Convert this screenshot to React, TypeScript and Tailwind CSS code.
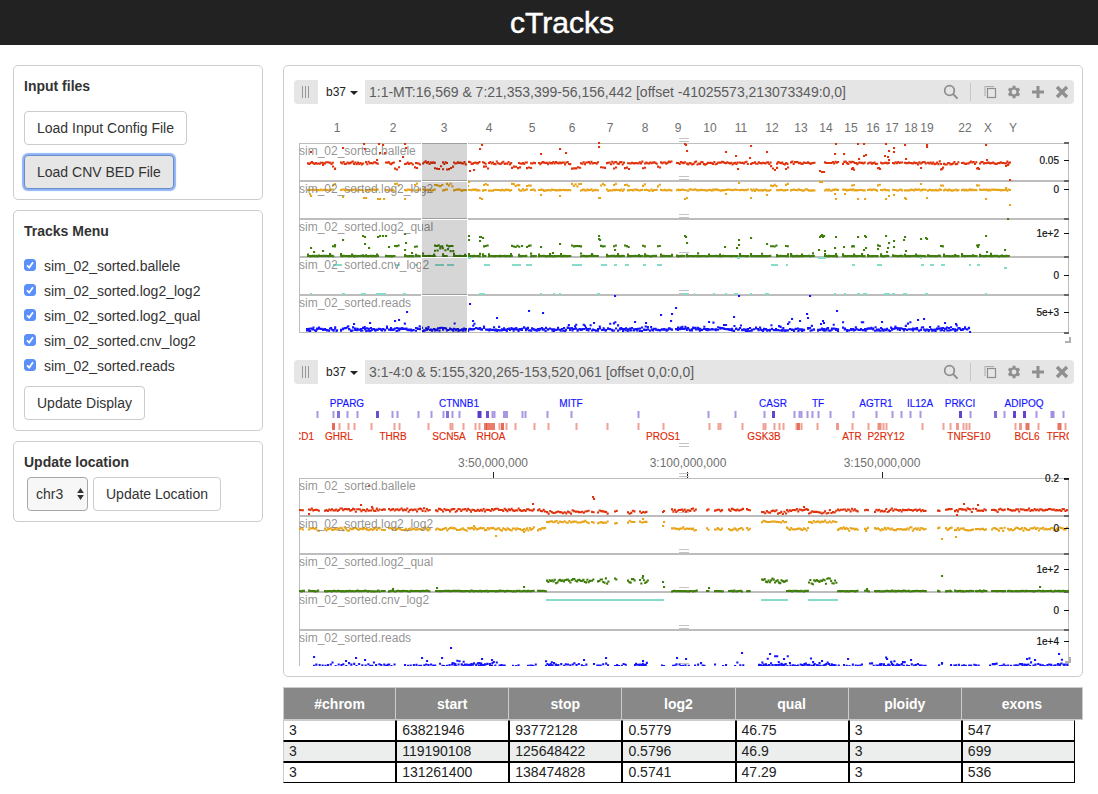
import type { ReactNode } from "react";

type Range = [number, number];
type Point = [number, number];

const RED = "#e0320c";
const AMBER = "#e8a51c";
const GREEN = "#3f7d0c";
const TEAL = "#86dccb";
const BLUE = "#1414ff";
const FONT = "'Liberation Sans', Arial, sans-serif";

const TRACKS = [
  "sim_02_sorted.ballele",
  "sim_02_sorted.log2_log2",
  "sim_02_sorted.log2_qual",
  "sim_02_sorted.cnv_log2",
  "sim_02_sorted.reads",
];

function makeRandom(seed: number) {
  let s = seed;
  return () => {
    s = (s * 1664525 + 1013904223) % 4294967296;
    return s / 4294967296;
  };
}

/* Fills each x range with points scattered round a level. */
function scatter(ranges: Range[], level: number, spread: number, step: number, seed: number): Point[] {
  const rnd = makeRandom(seed);
  const out: Point[] = [];
  for (const [a, b] of ranges) {
    for (let x = a; x <= b; x += step) out.push([x, level + (rnd() + rnd() - 1) * spread]);
  }
  return out;
}

/* Read depth: most points near the floor, with an exponential tail upwards. */
function depth(ranges: Range[], floor: number, scale: number, step: number, seed: number): Point[] {
  const rnd = makeRandom(seed);
  const out: Point[] = [];
  for (const [a, b] of ranges) {
    for (let x = a; x <= b; x += step * (0.6 + rnd() * 0.8)) {
      out.push([x, floor - Math.min(-Math.log(1 - rnd()) * scale, scale * 4)]);
    }
  }
  return out;
}

function dotsPath(points: Point[]) {
  return points.map(([x, y]) => `M${(x - 1).toFixed(1)} ${(y - 1).toFixed(1)}h2.1v2.1h-2.1z`).join("");
}

function Dots({ points, color }: { points: Point[]; color: string }) {
  return <path d={dotsPath(points)} fill={color} />;
}

function Bars({ ranges, y, color }: { ranges: Range[]; y: number; color: string }) {
  return <path d={ranges.map(([a, b]) => `M${a} ${y}H${b}`).join("")} stroke={color} strokeWidth={2} />;
}

/* ---------- Whole-genome view ---------- */

const CHROMS: [string, number][] = [
  ["1", 337], ["2", 393], ["3", 444], ["4", 489], ["5", 532], ["6", 572], ["7", 610], ["8", 645],
  ["9", 678], ["10", 710], ["11", 741], ["12", 772], ["13", 801], ["14", 826], ["15", 851],
  ["16", 873], ["17", 892], ["18", 911], ["19", 927], ["22", 965], ["X", 988], ["Y", 1013],
];

const BASE: Range[] = [
  [308, 334], [341, 364], [366, 378], [386, 395], [405, 414], [416, 420], [423, 435], [443, 447],
  [454, 467], [469, 480], [483, 486], [489, 512], [519, 527], [531, 536], [539, 571], [581, 598],
  [607, 624], [628, 643], [645, 657], [661, 672], [677, 685], [687, 738], [740, 749], [751, 771],
  [777, 788], [791, 815], [825, 838], [843, 860], [862, 865], [868, 878], [881, 889], [893, 903],
  [905, 926], [928, 941], [944, 959], [962, 977], [980, 1010],
];

const GAINS: Range[] = [
  [333, 336], [395, 400], [415, 418], [435, 443], [447, 454], [484, 489], [512, 520], [527, 531],
  [572, 581], [601, 606], [614, 616], [625, 629], [643, 645], [658, 661], [771, 778], [786, 788],
  [852, 855], [878, 881], [941, 944], [977, 979],
];

const LOSSES: Range[] = [
  [310, 312], [342, 345], [361, 366], [376, 386], [403, 406], [479, 485], [540, 542], [553, 555],
  [559, 561], [597, 600], [683, 688], [694, 695], [713, 715], [725, 727], [734, 738], [750, 752],
  [765, 769], [834, 836], [844, 846], [857, 860], [863, 867], [884, 890], [892, 895], [903, 907],
  [925, 928], [985, 987],
];

const RED_HIGH: Point[] = [
  [311, 152], [343, 148], [364, 144], [365, 149], [379, 144], [383, 145], [380, 153], [385, 153],
  [405, 144], [406, 148], [403, 157], [400, 161], [377, 160], [480, 149], [482, 145], [541, 154],
  [560, 149], [566, 153], [599, 143], [599, 147], [685, 144], [686, 145], [687, 151], [726, 152],
  [736, 156], [750, 158], [751, 146], [767, 152], [836, 144], [835, 154], [844, 154], [859, 159],
  [858, 144], [864, 144], [864, 156], [866, 155], [886, 144], [885, 156], [889, 151], [888, 157],
  [889, 160], [894, 148], [894, 152], [905, 145], [927, 145], [927, 147], [906, 159], [986, 145],
  [987, 160], [1010, 180],
];

const RED_LOW: Point[] = [
  [335, 169], [323, 165], [470, 171], [474, 170], [738, 169], [820, 171], [822, 172], [824, 172], [853, 168],
  [879, 168], [921, 168], [942, 169], [978, 168], [1006, 166], [1008, 165],
];

const AMBER_EXTRA: Point[] = [
  [310, 194], [311, 196], [343, 197], [364, 198], [366, 198], [378, 199], [380, 199], [384, 199], [405, 199],
  [469, 182], [468, 186], [480, 198], [482, 199], [541, 195], [560, 196], [599, 198], [600, 198], [685, 199],
  [687, 198], [726, 194], [739, 183], [751, 198], [767, 195], [820, 182], [822, 182], [836, 199], [835, 194],
  [858, 199], [865, 199], [845, 194], [886, 199], [889, 196], [894, 195], [905, 198], [906, 199],
  [921, 184], [927, 198], [986, 199], [1006, 188], [1010, 205],
];

const GREEN_EXTRA: Point[] = [
  [311, 248], [314, 252], [323, 251], [335, 245], [343, 240], [363, 236], [365, 237], [365, 244], [369, 248],
  [378, 237], [380, 236], [383, 236], [386, 236], [389, 247], [405, 234], [406, 243], [405, 250], [412, 253],
  [469, 236], [469, 240], [480, 237], [481, 237], [483, 238], [480, 241], [522, 246], [541, 247], [553, 253],
  [560, 244], [599, 236], [599, 239], [600, 240], [615, 250], [685, 236], [686, 237], [687, 243], [725, 247],
  [739, 240], [737, 248], [739, 245], [751, 238], [767, 244], [820, 237], [821, 236], [822, 235], [823, 237],
  [824, 236], [819, 250], [825, 251], [836, 237], [835, 248], [844, 247], [858, 237], [865, 236], [866, 237],
  [864, 250], [853, 246], [866, 248], [878, 249], [886, 236], [889, 243], [888, 248], [887, 252], [894, 241],
  [894, 247], [905, 237], [904, 240], [906, 251], [921, 239], [926, 238], [927, 239], [942, 246], [978, 247],
  [986, 236], [987, 252], [1005, 250], [1008, 219],
];

const TEAL_HIGH: Range[] = [
  [333, 342], [395, 400], [415, 418], [435, 444], [447, 454], [484, 490], [512, 521], [526, 532],
  [572, 582], [601, 607], [614, 617], [625, 629], [643, 646], [657, 662], [771, 778], [786, 788],
  [852, 855], [877, 882], [921, 924], [930, 934], [941, 945], [969, 971], [977, 980],
];

const READS_HIGH: Point[] = [
  [470, 304], [407, 312], [529, 311], [543, 313], [615, 296], [661, 315], [676, 308], [672, 314], [671, 321],
  [399, 320], [370, 323], [497, 318], [473, 321], [395, 321], [354, 324], [594, 323], [635, 322], [646, 323],
  [734, 317], [709, 322], [724, 325], [726, 325], [792, 319], [800, 321], [807, 314], [808, 318], [837, 311],
  [810, 296], [739, 296], [823, 321], [824, 323], [788, 324], [821, 324], [882, 322], [918, 320], [924, 319],
  [945, 323], [956, 324], [970, 332],
];

const READ_SPANS: Range[] = [[307, 337], [341, 414], [416, 467], [468, 672], [676, 805], [808, 815], [818, 838], [843, 970]];

function Divider({ y }: { y: number }) {
  return (
    <>
      <rect x={299} y={y - 1} width={770} height={2} fill="#bdbdbd" />
      <rect x={1064} y={y - 1} width={5} height={2} fill="#666" />
    </>
  );
}

function Grip({ y }: { y: number }) {
  return <path d={`M679 ${y + 0.5}h10M679 ${y + 3.5}h10`} stroke="#c4c4c4" strokeWidth={1} />;
}

function AxisTick({ y, label }: { y: number; label: string }) {
  return (
    <>
      <path d={`M1064 ${y + 0.5}h5`} stroke="#111" />
      <text x={1059} y={y + 4} textAnchor="end" fontSize={10} fill="#111" stroke="#111" strokeWidth={0.2}>
        {label}
      </text>
    </>
  );
}

function TrackNames({ tops }: { tops: number[] }) {
  return (
    <g fontSize={12} fill="#808080" fillOpacity={0.85}>
      {TRACKS.map((name, i) => (
        <text key={name} x={299} y={tops[i] + 12}>{name}</text>
      ))}
    </g>
  );
}

function GenomeView() {
  return (
    <svg viewBox="294 104 780 256" className="block h-auto w-full" fontFamily={FONT} role="img" aria-label="Whole genome tracks">
      <g fontSize={12} fill="#707070" textAnchor="middle">
        {CHROMS.map(([name, x]) => (
          <text key={name} x={x} y={132}>{name}</text>
        ))}
      </g>
      <path d="M299 143.5H1069M299 332.5H1069M299.5 143V333M1068.5 143V333" stroke="#bdbdbd" />
      <rect x={1064} y={142} width={5} height={2} fill="#666" />
      <rect x={1064} y={332} width={5} height={2} fill="#666" />
      {[181, 219, 257, 295].map((y) => <Divider key={y} y={y} />)}
      {[138, 176, 214, 252, 290].map((y) => <Grip key={y} y={y} />)}

      <Dots color={RED} points={[...scatter(BASE, 163, 1.8, 1.3, 7), ...scatter(GAINS, 168, 2, 2, 8), ...RED_HIGH, ...RED_LOW]} />
      <Dots color={AMBER} points={[...scatter(BASE, 190, 0.9, 1.3, 17), ...scatter(GAINS, 185, 1.8, 1.8, 18), ...AMBER_EXTRA]} />
      <Dots color={GREEN} points={[...scatter(BASE, 256, 0.3, 1.2, 27), ...scatter(BASE, 254.5, 1.6, 11, 28), ...scatter(GAINS, 246, 1.2, 1.8, 29), ...scatter([[435, 454]], 250, 3, 2.6, 30), ...GREEN_EXTRA]} />
      <Bars color={TEAL} y={265} ranges={TEAL_HIGH} />
      <Bars color={TEAL} y={294} ranges={LOSSES} />
      <Bars color={TEAL} y={258} ranges={[[818, 826], [737, 740], [920, 922], [468, 471]]} />
      <Bars color={TEAL} y={268} ranges={[[1004, 1007]]} />
      <Dots color={BLUE} points={[...depth(READ_SPANS, 331, 2.2, 1.9, 91), ...scatter(READ_SPANS, 329, 2, 2, 38), ...READS_HIGH]} />

      <TrackNames tops={[143, 181, 219, 257, 295]} />
      <rect x={422} y={143} width={45} height={190} fill="#000" fillOpacity={0.16} />
      <path d="M421.5 143V334M467.5 143V334M422 181.5H467M422 219.5H467M422 257.5H467M422 295.5H467" stroke="#fff" />

      <AxisTick y={160} label="0.05" />
      <AxisTick y={189} label="0" />
      <AxisTick y={233} label="1e+2" />
      <AxisTick y={275} label="0" />
      <AxisTick y={312} label="5e+3" />
      <path d="M1065 342H1070V337" fill="none" stroke="#b0b0b0" strokeWidth={2} />
    </svg>
  );
}

/* ---------- Chromosome 3 view ---------- */

type Mark = [x: number, width: number, opacity: number];

const m = (xs: number[], width = 2, opacity = 0.5): Mark[] => xs.map((x) => [x, width, opacity]);

const FORWARD: Mark[] = [
  ...m([317, 333, 347, 357, 392, 397, 418, 431, 443, 452, 459, 492, 494, 522, 525, 547, 571, 638, 708, 735, 764, 794, 799, 801, 807, 812, 818]),
  ...m([830, 853, 876, 892, 901, 910, 920, 970, 1004, 1036, 1063]),
  ...m([338, 447], 3, 0.7), ...m([377, 487], 3, 0.85), ...m([479], 4, 0.95), ...m([505], 5, 0.5),
  ...m([773, 960, 1014, 1024], 3, 0.9), ...m([995], 3, 0.7), ...m([1052], 4, 0.55),
];

const REVERSE: Mark[] = [
  ...m([339, 348, 354, 371, 394, 399, 428, 450, 452, 463, 475, 479, 499, 506, 515, 534, 548, 576, 607, 638, 663, 709, 718, 720, 742, 763, 765, 774, 779, 783, 796, 801, 817]),
  ...m([852, 868, 883, 886, 922, 943, 950, 963, 966, 969, 1015, 1038, 1065]),
  ...m([333, 502], 3, 0.8), ...m([485, 487, 490, 493], 3, 0.7), ...m([798], 3, 0.75),
  ...m([837, 957, 1020], 3, 0.55), ...m([879], 4, 0.6), ...m([1027, 1059], 4, 0.75),
];

const FORWARD_GENES: [string, number][] = [
  ["PPARG", 347], ["CTNNB1", 459], ["MITF", 571], ["CASR", 773], ["TF", 818],
  ["AGTR1", 876], ["IL12A", 920], ["PRKCI", 960], ["ADIPOQ", 1024],
];

const REVERSE_GENES: [string, number][] = [
  ["CD1", 304], ["GHRL", 339], ["THRB", 393], ["SCN5A", 449], ["RHOA", 491], ["PROS1", 663],
  ["GSK3B", 764], ["ATR", 852], ["P2RY12", 886], ["TNFSF10", 969], ["BCL6", 1027], ["TFRC", 1060],
];

const C3_BASE: Range[] = [
  [300, 304], [309, 319], [325, 380], [382, 385], [389, 430], [436, 530], [531, 534], [538, 546],
  [672, 697], [707, 709], [715, 723], [729, 743], [747, 750], [787, 808], [838, 858], [865, 869],
  [875, 926], [938, 940], [946, 952], [955, 974], [976, 987], [992, 1005], [1008, 1068],
];
const C3_GAIN: Range[] = [[547, 590], [592, 594], [598, 609], [615, 617], [628, 635], [640, 648], [762, 787], [809, 837]];
const C3_CALLS: Range[] = [[546, 664], [761, 788], [808, 838]];
const C3_READS: Range[] = [
  [314, 395], [405, 436], [440, 507], [513, 521], [528, 538], [546, 589], [594, 609], [615, 627],
  [635, 648], [662, 666], [673, 691], [695, 706], [715, 717], [723, 727], [735, 744], [759, 839],
  [844, 862], [870, 926], [939, 943], [951, 979], [990, 1068],
];
const C3_READS_BUSY: Range[] = [[452, 495], [546, 560], [636, 647], [759, 790], [802, 832], [880, 905], [1022, 1032], [1058, 1068]];

function C3View() {
  return (
    <svg viewBox="294 384 780 282" className="block h-auto w-full" fontFamily={FONT} role="img" aria-label="Chromosome 3 tracks">
      <defs>
        <clipPath id="c3-plot">
          <rect x={299} y={384} width={770} height={282} />
        </clipPath>
      </defs>
      <g clipPath="url(#c3-plot)">
        {FORWARD.map(([x, w, o], i) => (
          <rect key={i} x={x - w / 2 + 0.5} y={411} width={w} height={7} fill="#5330c8" fillOpacity={o} />
        ))}
        {REVERSE.map(([x, w, o], i) => (
          <rect key={i} x={x - w / 2 + 0.5} y={423} width={w} height={7} fill="#e0452c" fillOpacity={o} />
        ))}
        <g fontSize={10} textAnchor="middle" fill="#1414ff" stroke="#1414ff" strokeWidth={0.15}>
          {FORWARD_GENES.map(([name, x]) => <text key={name} x={x} y={407}>{name}</text>)}
        </g>
        <g fontSize={10} textAnchor="middle" fill="#dd2c08" stroke="#dd2c08" strokeWidth={0.15}>
          {REVERSE_GENES.map(([name, x]) => <text key={name} x={x} y={440}>{name}</text>)}
        </g>
      </g>
      <Grip y={443} />
      <g fontSize={12} fill="#707070" textAnchor="middle">
        <text x={493} y={467}>3:50,000,000</text>
        <text x={688} y={467}>3:100,000,000</text>
        <text x={882} y={467}>3:150,000,000</text>
      </g>
      <path d="M493.5 472V478M687.5 472V478M882.5 472V478" stroke="#222" />
      <path d="M299 478.5H1069M299.5 478V666M1068.5 478V666" stroke="#bdbdbd" />
      {[516, 554, 592, 630].map((y) => <Divider key={y} y={y} />)}
      {[473, 512, 549, 587, 625, 663].map((y) => <Grip key={y} y={y} />)}

      <g clipPath="url(#c3-plot)">
        <Dots color={RED} points={[...scatter(C3_BASE, 510, 2, 1.4, 5), ...scatter(C3_GAIN, 512, 2, 1.6, 6), [369, 486], [361, 505], [372, 507], [533, 504], [593, 497], [594, 499], [663, 512], [664, 511], [964, 504], [978, 505], [957, 515], [309, 514], [804, 507]]} />
        <Dots color={AMBER} points={[...scatter(C3_BASE, 529, 1.9, 1.4, 15), ...scatter(C3_GAIN, 522, 1.6, 1.6, 16), [496, 536], [942, 539], [956, 537], [663, 526], [664, 522], [866, 531], [524, 532], [474, 526], [643, 519]]} />
        <Dots color={GREEN} points={[...scatter(C3_BASE, 591, 0.5, 1.3, 25), ...scatter(C3_GAIN, 581, 3.6, 1.3, 26), [942, 576], [1040, 587], [643, 576], [663, 582], [664, 587], [524, 587], [393, 589], [437, 588], [709, 588], [867, 589]]} />
        <Bars color={TEAL} y={600} ranges={C3_CALLS} />
        <Dots color={BLUE} points={[...depth(C3_READS, 666, 0.9, 2.4, 35), ...depth(C3_READS_BUSY, 665, 2.2, 2, 36), [314, 657], [356, 658], [365, 660], [346, 661], [422, 658], [451, 648], [442, 658], [427, 661], [482, 659], [492, 660], [584, 660], [606, 658], [677, 658], [686, 659], [742, 653], [770, 654], [784, 659], [848, 659], [887, 659], [911, 660], [942, 663], [1027, 659], [1035, 660], [1059, 654], [643, 661]]} />
      </g>

      <TrackNames tops={[478, 516, 554, 592, 630]} />
      <rect x={1064} y={478} width={5} height={2} fill="#333" />
      <AxisTick y={478} label="0.2" />
      <AxisTick y={528} label="0" />
      <AxisTick y={569} label="1e+2" />
      <AxisTick y={610} label="0" />
      <AxisTick y={641} label="1e+4" />
      <path d="M1065 662H1070V657" fill="none" stroke="#b0b0b0" strokeWidth={2} />
    </svg>
  );
}

/* ---------- Page parts ---------- */

function IconButton({ label, children }: { label: string; children: ReactNode }) {
  return (
    <button type="button" aria-label={label} className="flex size-6 items-center justify-center text-[#8f8f8f]">
      <svg viewBox="0 0 16 16" className="size-4" fill="none" stroke="currentColor">{children}</svg>
    </button>
  );
}

function ViewBar({ location, label }: { location: string; label: string }) {
  return (
    <div className="flex h-6 items-stretch overflow-hidden rounded bg-[#e5e5e5]">
      <button type="button" aria-label="Move view" className="flex w-6 items-center justify-center text-[#999]">
        <svg viewBox="0 0 8 12" className="h-3 w-2" stroke="currentColor"><path d="M.5 0V12M3.5 0V12M6.5 0V12" /></svg>
      </button>
      <button type="button" className="flex w-[47px] items-center gap-1 bg-white pl-2 text-xs text-[#222]">
        b37
        <svg viewBox="0 0 8 4" className="mt-0.5 h-1 w-2 shrink-0" fill="#222"><path d="M0 0H8L4 4Z" /></svg>
      </button>
      <input aria-label={label} defaultValue={location} className="min-w-0 flex-1 bg-transparent pl-1 text-sm text-[#5c5c5c] outline-none" />
      <div className="mr-[7px] flex items-center">
        <IconButton label="Search genes">
          <circle cx="6.5" cy="6.5" r="4.8" strokeWidth="1.8" />
          <path d="M10 10L14.6 14.6" strokeWidth="2" />
        </IconButton>
      </div>
      <div className="my-[3px] w-px bg-[#c6c6c6]" />
      <div className="ml-[7px] flex items-center">
        <IconButton label="Copy view">
          <path d="M3 12V2.5H12" stroke="#aaa" />
          <rect x="5.5" y="4.5" width="8" height="9" strokeWidth="1.2" />
        </IconButton>
        <IconButton label="View settings">
          <circle cx="8" cy="8" r="3.6" strokeWidth="2.4" />
          <path d="M8 1.8V4M8 12V14.2M2.6 4.9L4.6 6M11.4 10L13.4 11.1M2.6 11.1L4.6 10M11.4 6L13.4 4.9" strokeWidth="3" />
        </IconButton>
        <IconButton label="Add track">
          <path d="M8 2V14M2 8H14" strokeWidth="3" />
        </IconButton>
        <IconButton label="Close view">
          <path d="M3 3L13 13M13 3L3 13" strokeWidth="3.4" />
        </IconButton>
      </div>
    </div>
  );
}

function Panel({ title, children }: { title: string; children: ReactNode }) {
  return (
    <section className="rounded-[5px] border border-[#ccc] p-2.5">
      <h2 className="text-sm font-bold leading-5">{title}</h2>
      {children}
    </section>
  );
}

function Button({ children, active = false }: { children: ReactNode; active?: boolean }) {
  return (
    <button
      type="button"
      className={
        active
          ? "rounded border border-[#6b8cc4] bg-[#e6e6e6] px-3 py-1.5 text-sm leading-5 shadow-[0_0_1px_2px_#8fb3f8]"
          : "rounded border border-[#ccc] bg-white px-3 py-1.5 text-sm leading-5"
      }
    >
      {children}
    </button>
  );
}

const COLUMNS = ["#chrom", "start", "stop", "log2", "qual", "ploidy", "exons"];
const ROWS = [
  ["3", "63821946", "93772128", "0.5779", "46.75", "3", "547"],
  ["3", "119190108", "125648422", "0.5796", "46.9", "3", "699"],
  ["3", "131261400", "138474828", "0.5741", "47.29", "3", "536"],
];

function CallsTable() {
  return (
    <table className="w-full table-fixed border-separate border-spacing-0 text-sm">
      <colgroup>
        {COLUMNS.map((c) => <col key={c} />)}
        <col className="w-2" />
      </colgroup>
      <thead>
        <tr>
          {COLUMNS.map((c, i) => (
            <th
              key={c}
              scope="col"
              colSpan={i === 6 ? 2 : 1}
              className="h-[33px] border-y border-r border-[#ccc] bg-[#888] p-0 text-center font-bold text-white first:border-l"
            >
              {c}
            </th>
          ))}
        </tr>
      </thead>
      <tbody>
        {ROWS.map((row) => (
          <tr key={row[1]} className="group even:bg-[#eceeed]">
            {row.map((cell, i) => (
              <td
                key={i}
                className="border border-black px-[5px] py-0 leading-[19px] text-[#222] first:border-l-[#ccc] group-first:border-t-[#ccc]"
              >
                {cell}
              </td>
            ))}
            <td className="bg-white p-0" />
          </tr>
        ))}
      </tbody>
    </table>
  );
}

export default function App() {
  return (
    <div className="min-h-screen bg-white font-['Liberation_Sans',Arial,sans-serif] text-[#333]">
      <header className="flex h-[45px] items-center justify-center bg-[#222] pl-[26px]">
        <h1 className="text-3xl leading-none text-white [-webkit-text-stroke:0.5px_#fff]">cTracks</h1>
      </header>

      <main className="flex items-start gap-5 pt-5 pr-[15px] pb-3 pl-[13px]">
        <aside className="flex w-[250px] shrink-0 flex-col gap-2.5">
          <Panel title="Input files">
            <div className="mt-[15px] flex flex-col items-start gap-2.5">
              <Button>Load Input Config File</Button>
              <Button active>Load CNV BED File</Button>
            </div>
          </Panel>

          <Panel title="Tracks Menu">
            <div className="mt-[15px] mb-2.5 flex flex-col gap-[5px]">
              {TRACKS.map((t) => (
                <label key={t} className="flex items-start gap-2 text-sm leading-5">
                  <span className="relative mt-[3px] flex size-3">
                    <input type="checkbox" defaultChecked className="peer size-3 appearance-none rounded-[3px] border border-[#aaa] checked:border-[#5b8ff9] checked:bg-[#5b8ff9]" />
                    <svg viewBox="0 0 12 12" className="pointer-events-none absolute inset-0 hidden size-3 peer-checked:block" fill="none" stroke="#fff" strokeWidth="1.7">
                      <path d="M3 6.4L5.2 8.6L9 3.2" />
                    </svg>
                  </span>
                  {t}
                </label>
              ))}
            </div>
            <Button>Update Display</Button>
          </Panel>

          <Panel title="Update location">
            <div className="mt-[5px] flex gap-[5px] pl-[3px]">
              <div className="relative">
                <select aria-label="Chromosome" defaultValue="chr3" className="h-[34px] w-[61px] appearance-none rounded border border-[#a6a6a6] bg-[#f7f7f7] pl-2 text-sm">
                  <option>chr1</option>
                  <option>chr2</option>
                  <option>chr3</option>
                  <option>chr4</option>
                </select>
                <svg viewBox="0 0 7 12" className="pointer-events-none absolute top-[11px] right-1 h-3 w-[7px]" fill="#333">
                  <path d="M3.5 0L6.8 5H.2ZM3.5 12L6.8 7H.2Z" />
                </svg>
              </div>
              <Button>Update Location</Button>
            </div>
          </Panel>
        </aside>

        <div className="flex min-w-0 flex-1 flex-col gap-2.5">
          <section className="rounded-[5px] border border-[#ccc] pt-3.5 pr-2 pb-2.5 pl-2.5">
            <ViewBar label="Genome view location" location="1:1-MT:16,569 & 7:21,353,399-56,156,442 [offset -41025573,213073349:0,0]" />
            <GenomeView />
            <ViewBar label="Chromosome view location" location="3:1-4:0 & 5:155,320,265-153,520,061 [offset 0,0:0,0]" />
            <C3View />
          </section>
          <CallsTable />
        </div>
      </main>
    </div>
  );
}
